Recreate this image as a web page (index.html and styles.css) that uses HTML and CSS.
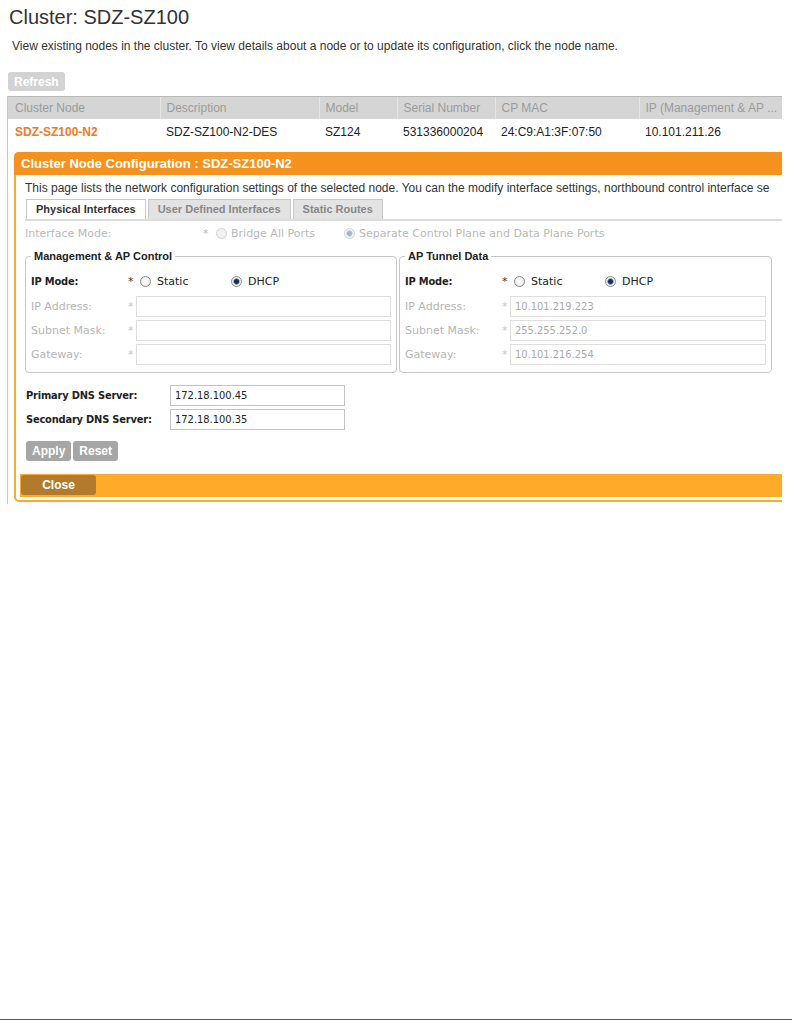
FILE: index.html
```html
<!DOCTYPE html>
<html>
<head>
    <meta charset="UTF-8">
    <title>Cluster: SDZ-SZ100</title>
    <link rel="stylesheet" href="styles.css">
</head>
<body>
<div class="page">
    <h1 class="page-title">Cluster: SDZ-SZ100</h1>
    <p class="page-desc">View existing nodes in the cluster. To view details about a node or to update its configuration, click the node name.</p>
    <button class="btn-refresh">Refresh</button>

    <div class="cluster-body">
        <table class="node-table">
            <colgroup>
                <col class="c-node">
                <col class="c-desc">
                <col class="c-model">
                <col class="c-serial">
                <col class="c-mac">
                <col class="c-ip">
            </colgroup>
            <thead>
                <tr>
                    <th>Cluster Node</th>
                    <th>Description</th>
                    <th>Model</th>
                    <th>Serial Number</th>
                    <th>CP MAC</th>
                    <th>IP (Management &amp; AP ...</th>
                </tr>
            </thead>
            <tbody>
                <tr>
                    <td><a class="node-link">SDZ-SZ100-N2</a></td>
                    <td>SDZ-SZ100-N2-DES</td>
                    <td>SZ124</td>
                    <td>531336000204</td>
                    <td>24:C9:A1:3F:07:50</td>
                    <td>10.101.211.26</td>
                </tr>
            </tbody>
        </table>

        <div class="dialog">
            <div class="dialog-head">Cluster Node Configuration : SDZ-SZ100-N2</div>
            <div class="dialog-body">
                <p class="dialog-desc">This page lists the network configuration settings of the selected node. You can the modify interface settings, northbound control interface se</p>

                <div class="tabs">
                    <span class="tab active">Physical Interfaces</span>
                    <span class="tab">User Defined Interfaces</span>
                    <span class="tab">Static Routes</span>
                </div>

                <div class="iface-row">
                    <span class="iface-label">Interface Mode:</span>
                    <span class="iface-star">*</span>
                    <span class="radio disabled"></span>
                    <span class="iface-opt">Bridge All Ports</span>
                    <span class="radio disabled checked second"></span>
                    <span class="iface-opt">Separate Control Plane and Data Plane Ports</span>
                </div>

                <div class="groups">
                    <fieldset class="group">
                        <legend>Management &amp; AP Control</legend>
                        <div class="mode-row">
                            <span class="mode-label">IP Mode:</span>
                            <span class="mode-star">*</span>
                            <span class="mode-opt"><span class="radio"></span>Static</span>
                            <span class="mode-opt"><span class="radio checked"></span>DHCP</span>
                        </div>
                        <div class="field-row">
                            <span class="field-label">IP Address:</span>
                            <span class="field-star">*</span>
                            <input class="field-input" type="text" value="" disabled>
                        </div>
                        <div class="field-row">
                            <span class="field-label">Subnet Mask:</span>
                            <span class="field-star">*</span>
                            <input class="field-input" type="text" value="" disabled>
                        </div>
                        <div class="field-row">
                            <span class="field-label">Gateway:</span>
                            <span class="field-star">*</span>
                            <input class="field-input" type="text" value="" disabled>
                        </div>
                    </fieldset>

                    <fieldset class="group right">
                        <legend>AP Tunnel Data</legend>
                        <div class="mode-row">
                            <span class="mode-label">IP Mode:</span>
                            <span class="mode-star">*</span>
                            <span class="mode-opt"><span class="radio"></span>Static</span>
                            <span class="mode-opt"><span class="radio checked"></span>DHCP</span>
                        </div>
                        <div class="field-row">
                            <span class="field-label">IP Address:</span>
                            <span class="field-star">*</span>
                            <input class="field-input" type="text" value="10.101.219.223" disabled>
                        </div>
                        <div class="field-row">
                            <span class="field-label">Subnet Mask:</span>
                            <span class="field-star">*</span>
                            <input class="field-input" type="text" value="255.255.252.0" disabled>
                        </div>
                        <div class="field-row">
                            <span class="field-label">Gateway:</span>
                            <span class="field-star">*</span>
                            <input class="field-input" type="text" value="10.101.216.254" disabled>
                        </div>
                    </fieldset>
                </div>

                <div class="dns-row first">
                    <span class="dns-label">Primary DNS Server:</span>
                    <input class="dns-input" type="text" value="172.18.100.45">
                </div>
                <div class="dns-row">
                    <span class="dns-label">Secondary DNS Server:</span>
                    <input class="dns-input" type="text" value="172.18.100.35">
                </div>

                <div class="actions">
                    <button class="btn-gray">Apply</button>
                    <button class="btn-gray">Reset</button>
                </div>
            </div>
            <div class="dialog-foot">
                <button class="btn-close">Close</button>
            </div>
        </div>
    </div>
</div>
</body>
</html>
```

FILE: styles.css
```css
html, body {
    margin: 0;
    background: #fff;
}
.page {
    min-height: 1020px;
    box-sizing: border-box;
    border-bottom: 1px solid #5c5c5c;
    font-family: "Liberation Sans", Arial, sans-serif;
    color: #333;
}
.page-title {
    margin: 0;
    padding: 6px 9px 0;
    font-size: 20px;
    font-weight: normal;
    line-height: 23px;
    color: #333;
}
.page-desc {
    margin: 10px 0 0;
    padding-left: 12px;
    font-size: 12px;
    line-height: 15px;
}
.btn-refresh {
    display: block;
    margin: 18px 0 0 8px;
    height: 19px;
    padding: 0 6px;
    border: none;
    border-radius: 3px;
    background: #d3d3d3;
    color: #fff;
    font-family: "Liberation Sans", Arial, sans-serif;
    font-size: 12px;
    font-weight: bold;
}
.cluster-body {
    margin: 5px 0 0 7px;
    width: 775px;
    box-sizing: border-box;
    border-left: 1px solid #c9c9c9;
    overflow: hidden;
    padding-bottom: 2px;
}

/* node table */
.node-table {
    border-collapse: collapse;
    table-layout: fixed;
    width: 781px;
    font-size: 12px;
}
.c-node { width: 152px; }
.c-desc { width: 159px; }
.c-model { width: 78px; }
.c-serial { width: 98px; }
.c-mac { width: 144px; }
.c-ip { width: 150px; }
.node-table th {
    height: 22px;
    padding: 0 4px 0 6px;
    border-top: 1px solid #b9b9b9;
    background: #d5d5d5;
    color: #9b9b9b;
    font-weight: normal;
    text-align: left;
    white-space: nowrap;
    overflow: hidden;
}
.node-table th + th {
    border-left: 1px solid #e6e6e6;
}
.node-table td {
    height: 26px;
    padding: 0 4px 0 6px;
    color: #222;
    white-space: nowrap;
}
.node-table th:first-child,
.node-table td:first-child {
    padding-left: 7px;
}
.node-link {
    color: #ee7b22;
    font-weight: bold;
}

/* dialog */
.dialog {
    margin: 7px 0 0 6px;
    width: 800px;
    border: 2px solid #fbab2b;
    border-top: 0;
    border-radius: 5px;
}
.dialog-head {
    margin: 0 -2px;
    height: 23px;
    padding-left: 7px;
    border-radius: 5px 5px 0 0;
    background: #f5921e;
    color: #fff;
    font-size: 13px;
    font-weight: bold;
    line-height: 24px;
}
.dialog-body {
    padding: 6px 0 0 9px;
}
.dialog-desc {
    margin: 0;
    font-size: 12px;
    line-height: 15px;
    white-space: nowrap;
}
.tabs {
    display: flex;
    gap: 2px;
    margin-top: 3px;
    padding-left: 1px;
    border-bottom: 2px solid #dcdcdc;
}
.tab {
    height: 19px;
    padding: 0 9px;
    border: 1px solid #c8c8c8;
    border-bottom: none;
    background: #e3e3e3;
    color: #888;
    font-size: 11px;
    font-weight: bold;
    line-height: 19px;
}
.tab.active {
    background: #fff;
    color: #333;
}

/* form */
.iface-row,
.mode-row,
.field-row,
.dns-row {
    display: flex;
    align-items: center;
    font-family: "DejaVu Sans", Verdana, sans-serif;
    font-size: 11px;
}
.iface-row {
    height: 16px;
    margin-top: 4px;
    color: #b9b9b9;
}
.iface-label {
    width: 178px;
}
.iface-star {
    width: 13px;
}
.iface-opt {
    margin-left: 4px;
}
.radio.second {
    margin-left: 29px;
}
.radio {
    display: inline-block;
    flex: none;
    width: 11px;
    height: 11px;
    box-sizing: border-box;
    border: 1px solid #8d8d8d;
    border-radius: 50%;
    background: radial-gradient(circle at 50% 50%, #fff 0, #e4e4e4 100%);
}
.radio.checked {
    background: radial-gradient(circle, #1b2d57 0 2px, #6f8fc4 2.8px, #eef2f8 3.6px);
}
.radio.disabled {
    border-color: #d2d2d2;
    background: #f2f2f2;
}
.radio.disabled.checked {
    background: radial-gradient(circle, #a9b4c6 0 2px, #c8d3e3 2.8px, #f4f6f9 3.6px);
}
.groups {
    display: flex;
    gap: 2px;
    margin-top: 8px;
}
.group {
    margin: 0;
    width: 372px;
    min-width: 0;
    box-sizing: border-box;
    padding: 7px 5px 7px 5px;
    border: 1px solid #c6c6c6;
    border-radius: 4px;
}
.group.right {
    width: 373px;
}
.group legend {
    padding: 0 3px;
    font-family: "Liberation Sans", Arial, sans-serif;
    font-size: 11px;
    font-weight: bold;
    line-height: 14px;
    color: #222;
}
.mode-row {
    height: 22px;
    color: #222;
}
.mode-label,
.dns-label {
    font-family: "DejaVu Sans Condensed", "DejaVu Sans", sans-serif;
    font-stretch: condensed;
    font-weight: bold;
    letter-spacing: -0.2px;
}
.mode-label {
    width: 97px;
}
.mode-star {
    width: 12px;
    color: #333;
}
.mode-opt {
    display: flex;
    align-items: center;
    gap: 6px;
    width: 91px;
}
.field-row {
    margin-top: 3px;
    color: #b5b5b5;
}
.mode-row + .field-row {
    margin-top: 4px;
}
.field-label {
    width: 97px;
}
.field-star {
    width: 8px;
    color: #c8c8c8;
}
.field-input,
.dns-input {
    height: 21px;
    box-sizing: border-box;
    padding: 0 4px;
    border: 1px solid #dedede;
    background: #fff;
    font-family: "DejaVu Sans Condensed", "DejaVu Sans", sans-serif;
    font-stretch: condensed;
    font-size: 11px;
    outline: none;
}
.field-input {
    flex: 1;
    min-width: 0;
    color: #ababab;
}
.dns-row {
    margin-top: 3px;
    padding-left: 1px;
    color: #222;
}
.dns-row.first {
    margin-top: 12px;
}
.dns-label {
    width: 144px;
}
.dns-input {
    width: 175px;
    border-color: #c4c4c4;
    color: #222;
}
.actions {
    display: flex;
    gap: 2px;
    margin: 11px 0 0 1px;
}
.btn-gray {
    height: 20px;
    padding: 0 6px;
    border: none;
    border-radius: 3px;
    background: #a6a6a6;
    color: #fff;
    font-family: "Liberation Sans", Arial, sans-serif;
    font-size: 12px;
    font-weight: bold;
}
.dialog-foot {
    margin: 13px 4px 3px;
    height: 23px;
    padding: 1px 0 0 1px;
    box-sizing: border-box;
    background: #fdab28;
}
.btn-close {
    display: block;
    width: 75px;
    height: 20px;
    border: none;
    border-radius: 3px;
    background: #b27a2c;
    color: #fff;
    font-family: "Liberation Sans", Arial, sans-serif;
    font-size: 12px;
    font-weight: bold;
}
```
